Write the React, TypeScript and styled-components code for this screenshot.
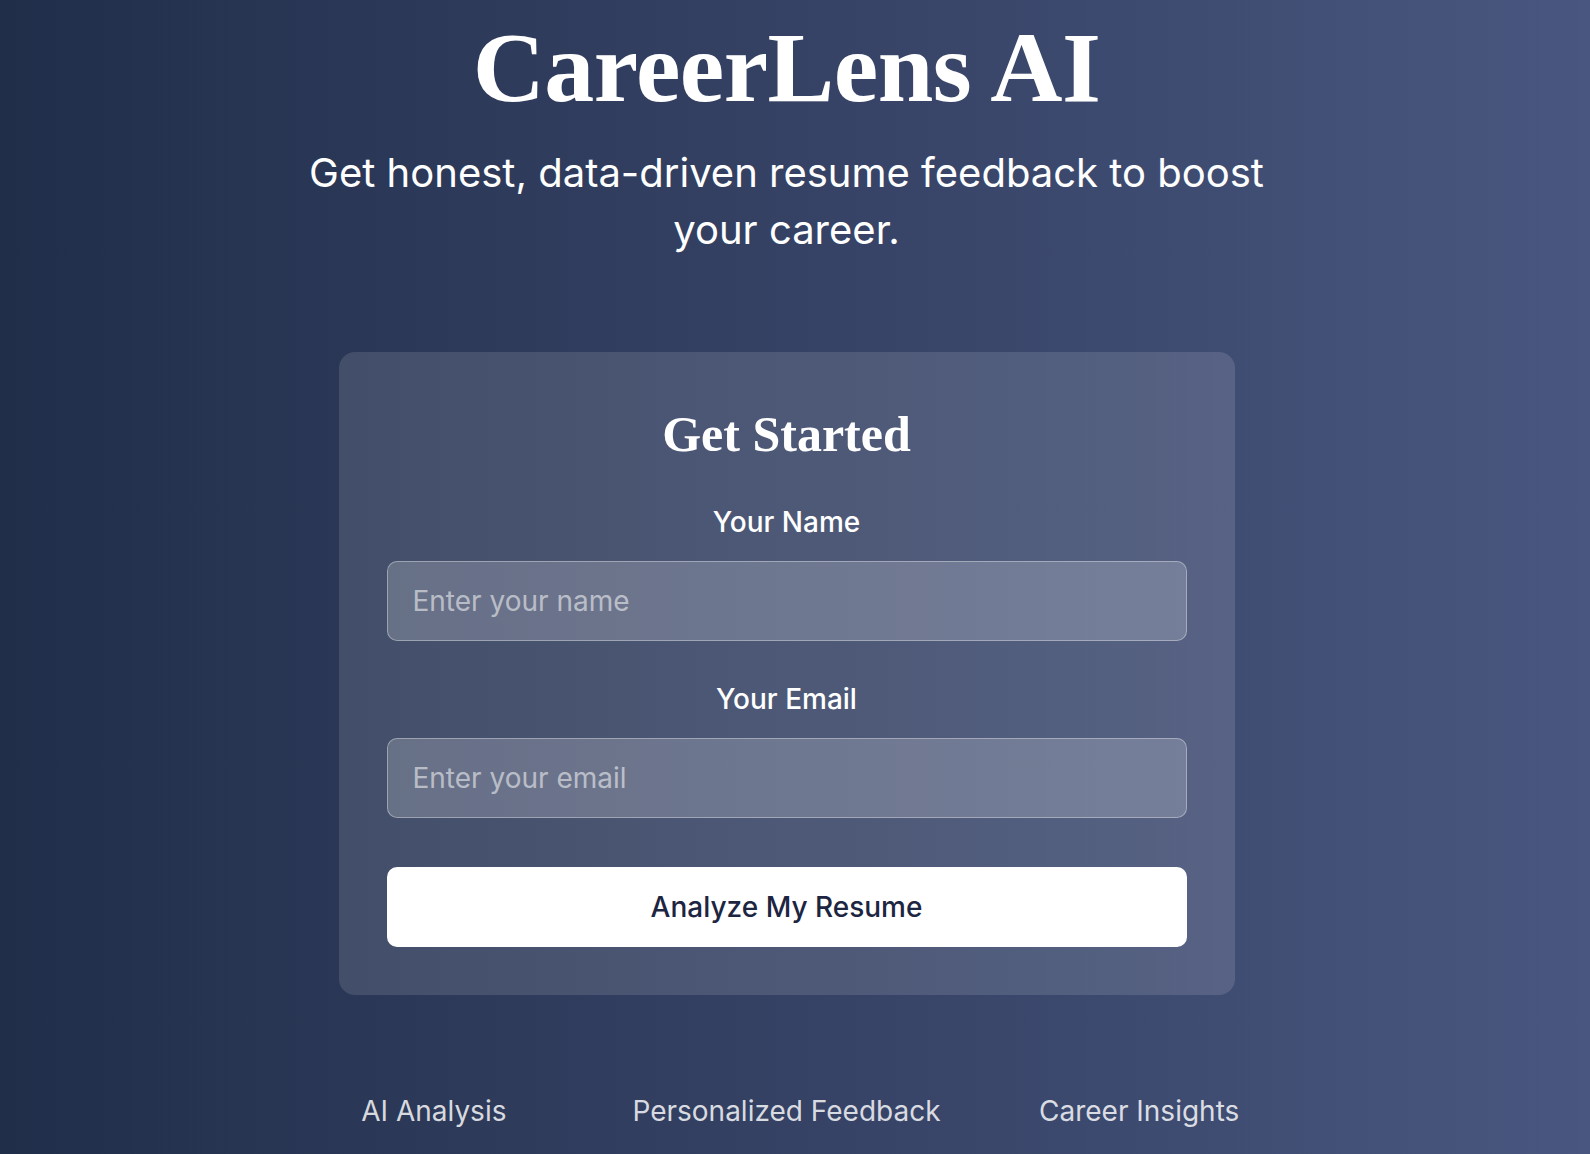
import styled, { createGlobalStyle } from 'styled-components';

const GlobalStyle = createGlobalStyle`
  * {
    box-sizing: border-box;
  }

  body {
    margin: 0;
    min-height: 100vh;
    background: linear-gradient(to right, #212e4a, #49567f);
    font-family: Inter, 'Noto Sans', sans-serif;
    color: #ffffff;
  }
`;

const features = ['AI Analysis', 'Personalized Feedback', 'Career Insights'];

export default function App() {
  return (
    <>
      <GlobalStyle />
      <Page>
        <Title>CareerLens AI</Title>
        <Tagline>Get honest, data-driven resume feedback to boost your career.</Tagline>

        <Card>
          <CardTitle>Get Started</CardTitle>

          <Field>
            <Label htmlFor="name">Your Name</Label>
            <Input id="name" type="text" placeholder="Enter your name" />
          </Field>

          <Field>
            <Label htmlFor="email">Your Email</Label>
            <Input id="email" type="email" placeholder="Enter your email" />
          </Field>

          <Button type="button">Analyze My Resume</Button>
        </Card>

        <Features>
          {features.map((item) => (
            <Feature key={item}>{item}</Feature>
          ))}
        </Features>
      </Page>
    </>
  );
}

const Page = styled.main`
  display: flex;
  flex-direction: column;
  align-items: center;
  padding: 8px 17px 40px 0;
  text-align: center;
`;

const Title = styled.h1`
  margin: 0;
  font-family: 'Liberation Serif', 'Times New Roman', serif;
  font-size: 100px;
  font-weight: 700;
  line-height: 120px;
  letter-spacing: -0.5px;
`;

const Tagline = styled.p`
  max-width: 1000px;
  margin: 16px 0 0;
  font-size: 40px;
  font-weight: 400;
  line-height: 57px;
`;

const Card = styled.section`
  display: flex;
  flex-direction: column;
  width: 896px;
  margin-top: 94px;
  padding: 48px;
  border-radius: 16px;
  background: rgba(255, 255, 255, 0.12);
`;

const CardTitle = styled.h2`
  margin: 4px 0 38px;
  font-family: 'Liberation Serif', 'Times New Roman', serif;
  font-size: 50px;
  font-weight: 700;
  line-height: 60px;
`;

const Field = styled.div`
  display: flex;
  flex-direction: column;
  margin-bottom: 38px;
`;

const Label = styled.label`
  margin-bottom: 19px;
  font-size: 28px;
  font-weight: 500;
  line-height: 40px;
`;

const Input = styled.input`
  height: 80px;
  padding: 0 25px;
  border: 1px solid rgba(255, 255, 255, 0.35);
  border-radius: 10px;
  background: rgba(255, 255, 255, 0.19);
  color: #ffffff;
  font-family: Inter, 'Noto Sans', sans-serif;
  font-size: 28px;
  outline: none;

  &::placeholder {
    color: rgba(255, 255, 255, 0.55);
  }
`;

const Button = styled.button`
  height: 80px;
  margin-top: 11px;
  border: none;
  border-radius: 10px;
  background: #ffffff;
  color: #1c2541;
  font-family: Inter, 'Noto Sans', sans-serif;
  font-size: 28px;
  font-weight: 500;
  cursor: pointer;
`;

const Features = styled.ul`
  display: grid;
  grid-template-columns: repeat(3, 1fr);
  width: 1058px;
  margin: 95px 0 0;
  padding: 0;
  list-style: none;
`;

const Feature = styled.li`
  font-size: 28px;
  line-height: 42px;
  color: rgba(255, 255, 255, 0.82);
`;
